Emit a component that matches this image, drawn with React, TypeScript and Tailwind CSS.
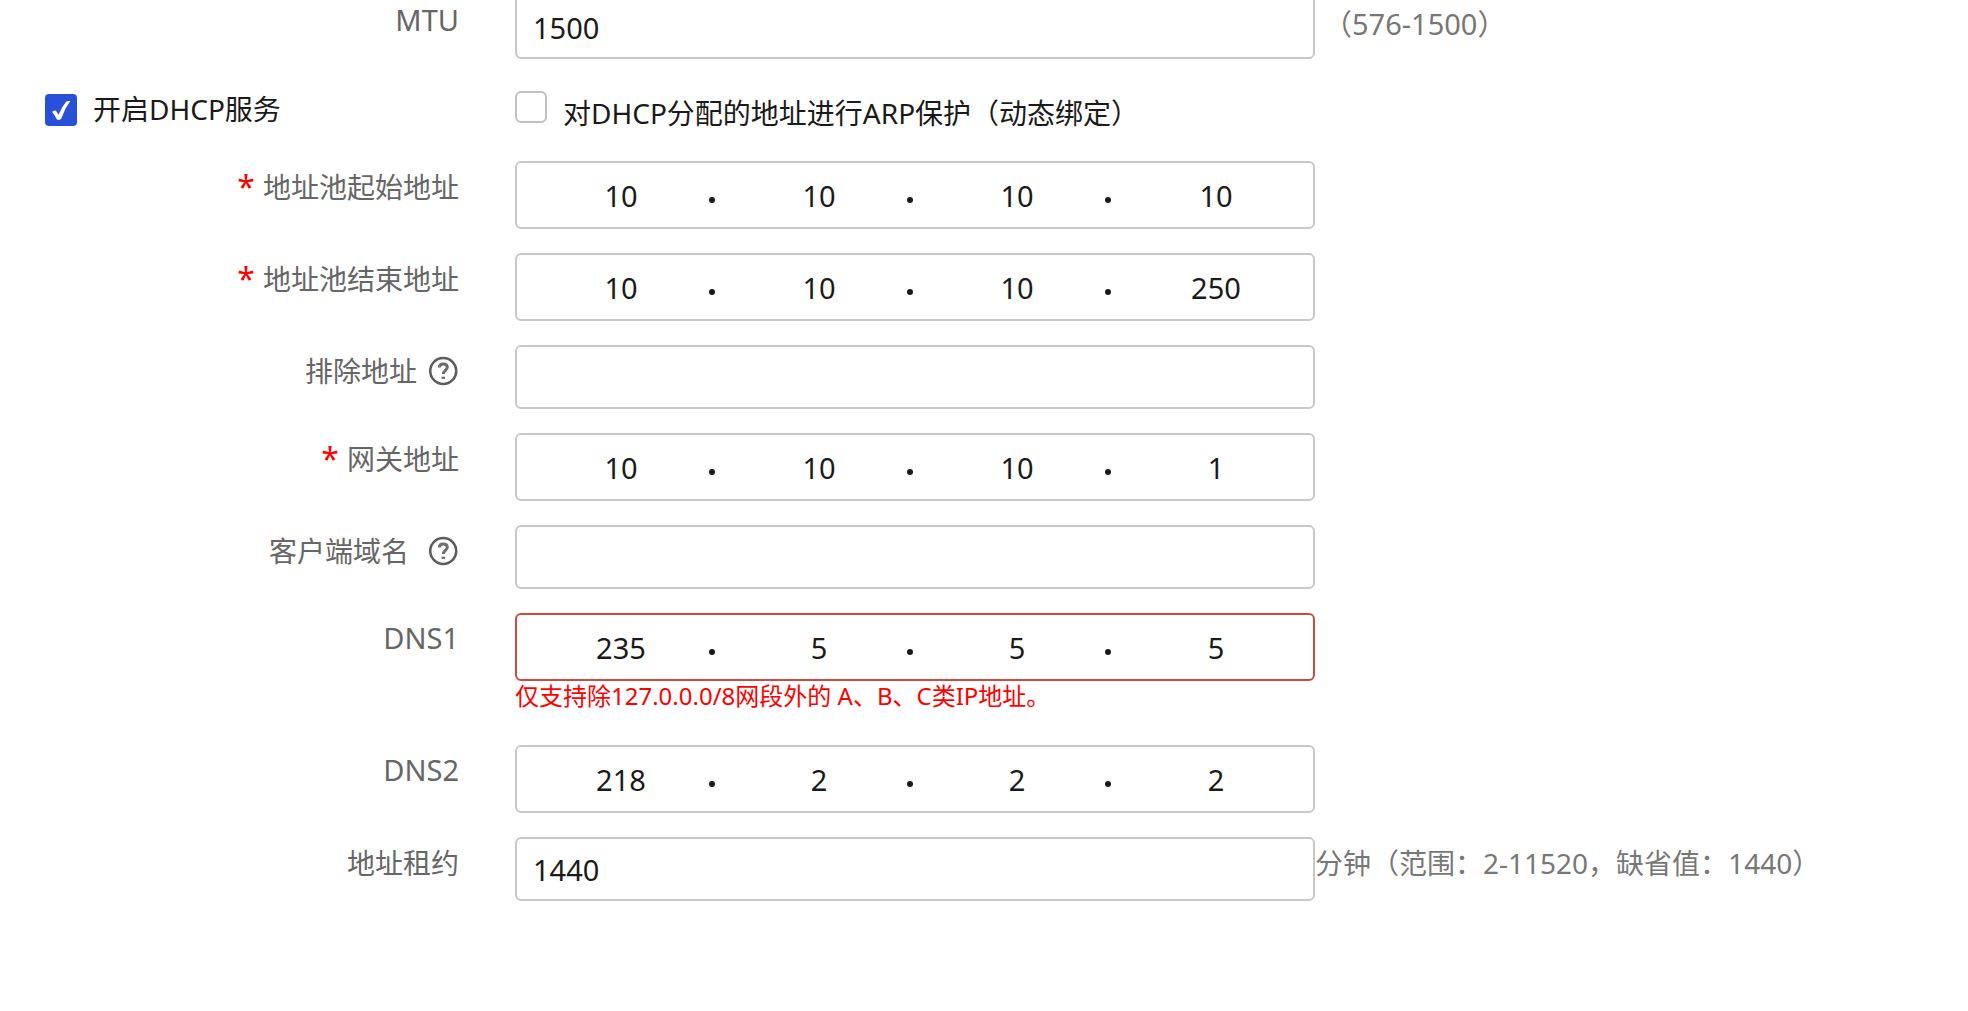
import { useId, useState } from 'react'
import type { ReactNode } from 'react'
import clsx from 'clsx'

function HelpIcon() {
  return (
    <svg viewBox="0 0 30 30" className="size-[30px]" fill="none" stroke="#5c5c5c" aria-hidden="true">
      <circle cx="14.2" cy="15" r="13" strokeWidth="2.6" />
      <path d="M10.3 11.6c0-2.3 1.6-3.7 4-3.7s4 1.4 4 3.4c0 3-3.9 3.2-3.9 6.6" stroke="#6e6e6e" strokeWidth="3" />
      <path d="M12.6 21.8h3.4" stroke="#6e6e6e" strokeWidth="2.2" />
    </svg>
  )
}

interface RowProps {
  label: string
  htmlFor?: string
  id?: string
  required?: boolean
  help?: 'near' | 'far'
  latin?: boolean
  children: ReactNode
}

function Row({ label, htmlFor, id, required, help, latin, children }: RowProps) {
  return (
    <div className="flex items-start">
      <div
        className={clsx(
          'mr-14 flex w-[459px] shrink-0 items-center justify-end text-[#666]',
          latin ? 'pt-1.5 text-[29px] leading-[38px]' : 'pt-1.5 leading-10',
        )}
      >
        {required && <span className="mr-2 text-[32px] text-[#f00]">*</span>}
        <label htmlFor={htmlFor} id={id}>
          {label}
        </label>
        {help && (
          <button type="button" aria-label="帮助" className={help === 'near' ? 'ml-3' : 'ml-5'}>
            <HelpIcon />
          </button>
        )}
      </div>
      {children}
    </div>
  )
}

interface TextRowProps {
  label: string
  defaultValue?: string
  help?: 'near' | 'far'
  latin?: boolean
  hint?: ReactNode
}

function TextRow({ label, defaultValue, help, latin, hint }: TextRowProps) {
  const id = useId()
  return (
    <Row label={label} htmlFor={id} help={help} latin={latin}>
      <input
        id={id}
        type="text"
        defaultValue={defaultValue}
        className="h-16 w-[800px] min-w-0 rounded-md border-2 border-[#c8c8c8] bg-white px-4 text-[29px] text-[#1a1a1a]"
      />
      {hint}
    </Row>
  )
}

interface IpRowProps {
  label: string
  value: string
  required?: boolean
  latin?: boolean
  error?: string
}

function IpRow({ label, value, required, latin, error }: IpRowProps) {
  const id = useId()
  const parts = value.split('.')
  return (
    <Row label={label} id={id} required={required} latin={latin}>
      <div className="w-[800px] min-w-0">
        <div
          role="group"
          aria-labelledby={id}
          className={clsx(
            'flex h-[68px] items-center rounded-md border-2 bg-white pr-3 pl-5',
            error ? 'border-[#cc4a42]' : 'border-[#c8c8c8]',
          )}
        >
          {parts.map((part, i) => (
            <div key={i} className={clsx('flex min-w-0 items-center', i < 3 ? 'flex-[198]' : 'flex-[170]')}>
              <input
                type="text"
                aria-label={`${label} ${i + 1}`}
                defaultValue={part}
                className="w-full min-w-0 bg-transparent pt-0.5 text-center text-[29px] text-[#1a1a1a]"
              />
              {i < 3 && <span className="mt-2.5 mr-5 ml-1 size-1.5 shrink-0 rounded-full bg-[#1a1a1a]" />}
            </div>
          ))}
        </div>
        {error && <p className="pb-2.5 text-2xl leading-[30px] text-[#f00]">{error}</p>}
      </div>
    </Row>
  )
}

interface CheckProps {
  label: string
  initial?: boolean
  className?: string
  textClassName?: string
}

function Check({ label, initial = false, className, textClassName }: CheckProps) {
  const [checked, setChecked] = useState(initial)
  return (
    <label className={clsx('flex items-start gap-4 text-[#1a1a1a]', className)}>
      <span className="relative size-8 shrink-0">
        <input
          type="checkbox"
          checked={checked}
          onChange={(e) => setChecked(e.target.checked)}
          className="block size-8 appearance-none rounded-md border-2 border-[#c0c0c0] bg-white checked:rounded-sm checked:border-[#2850d8] checked:bg-[#2850d8]"
        />
        {checked && (
          <svg viewBox="0 0 32 32" className="pointer-events-none absolute inset-0" fill="#fff" aria-hidden="true">
            <path d="M7 17.8l2.6-1.2q1.2-.3 1.9.9l2 3.2Q17 12.5 21.3 7.6q.8-.7 1.8-.6h2.2Q19.6 14.6 16.3 24.6q-.4 1.1-1.5 1.2h-2q-.8-.1-1.2-.9Q9.6 21 7 17.8z" />
          </svg>
        )}
      </span>
      <span className={textClassName}>{label}</span>
    </label>
  )
}

export default function App() {
  return (
    <main className="min-h-screen overflow-hidden bg-white font-['Noto_Sans','Noto_Sans_CJK_SC',sans-serif] text-[28px]">
      <form className="-mt-[5px] flex flex-col gap-6">
        <TextRow
          label="MTU"
          defaultValue="1500"
          latin
          hint={<span className="ml-2 shrink-0 pt-2.5 text-[29px] leading-[38px] text-[#777]">（576-1500）</span>}
        />
        <div className="flex h-[54px] items-start">
          <div className="w-[515px] shrink-0 pt-[11px] pl-[45px]">
            <Check label="开启DHCP服务" initial textClassName="leading-[30px]" />
          </div>
          <Check
            label="对DHCP分配的地址进行ARP保护（动态绑定）"
            className="pt-2"
            textClassName="pt-1.5 leading-8"
          />
        </div>
        <IpRow label="地址池起始地址" value="10.10.10.10" required />
        <IpRow label="地址池结束地址" value="10.10.10.250" required />
        <TextRow label="排除地址" help="near" />
        <IpRow label="网关地址" value="10.10.10.1" required />
        <TextRow label="客户端域名" help="far" />
        <IpRow label="DNS1" value="235.5.5.5" latin error="仅支持除127.0.0.0/8网段外的 A、B、C类IP地址。" />
        <IpRow label="DNS2" value="218.2.2.2" latin />
        <TextRow
          label="地址租约"
          defaultValue="1440"
          hint={<span className="shrink-0 pt-1.5 leading-10 text-[#777]">分钟（范围：2-11520，缺省值：1440）</span>}
        />
      </form>
    </main>
  )
}
